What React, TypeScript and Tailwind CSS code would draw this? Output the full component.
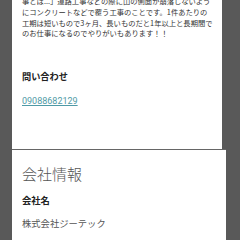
export default function App() {
  return (
    <main
      className="w-[240px] h-[240px] overflow-hidden bg-[#595959] px-[12px] flex"
      style={{ fontFamily: "'Noto Sans CJK JP', 'Noto Sans', sans-serif" }}
    >
      <div className="w-[214px] h-full flex flex-col">
        {/* 仕事内容 */}
        <section className="bg-white pl-[10px] h-[149px] mr-[4px]">
          <p className="-mt-[4px] w-[191px] text-[7.3px] leading-[10.8px] text-[#333]">
            事とは...」道路工事などの際に山の側面が崩落しないようにコンクリートなどで覆う工事のことです。1件あたりの工期は短いもので3ヶ月、長いものだと1年以上と長期間でのお仕事になるのでやりがいもあります！！
          </p>
          <h3 className="mt-[31px] text-[9.2px] leading-[12px] font-bold text-[#222]">問い合わせ</h3>
          <a
            href="#"
            className="block mt-[13px] text-[9px] leading-[12px] text-[#4f9aa6] underline"
            style={{ fontFamily: "Roboto, 'Noto Sans CJK JP', sans-serif" }}
          >
            09088682129
          </a>
        </section>

        {/* 会社情報 */}
        <section className="flex-1 bg-white border-t border-[#666] pl-[10px]">
          <h2 className="mt-[15px] text-[15px] leading-[18px] font-light text-[#555]">会社情報</h2>
          <h4 className="mt-[11px] text-[9.3px] leading-[12px] font-bold text-[#222]">会社名</h4>
          <p className="mt-[11px] text-[9.3px] leading-[12px] text-[#555]">株式会社ジーテック</p>
        </section>
      </div>
    </main>
  );
}
